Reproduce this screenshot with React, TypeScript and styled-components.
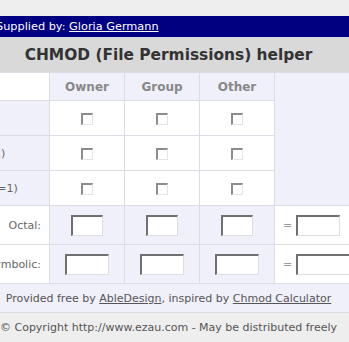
import React from 'react';
import styled, { createGlobalStyle } from 'styled-components';

const GlobalStyle = createGlobalStyle`
  body {
    margin: 0;
    background: #eeeeee;
    font-family: "DejaVu Sans", Verdana, sans-serif;
    overflow: hidden;
  }
`;

const Page = styled.div`
  margin-left: -70px;
  width: 477px;
  padding-top: 16px;
`;

const SupplyBar = styled.div`
  background: #000080;
  color: #ffffff;
  height: 21px;
  line-height: 21px;
  font-size: 11.3px;
  padding-left: 66px;

  a {
    color: #ffffff;
  }
`;

const Title = styled.h1`
  margin: 0;
  background: #d9d9d9;
  color: #333333;
  height: 35px;
  line-height: 36px;
  text-align: center;
  font-size: 15.4px;
  font-weight: bold;
`;

const Table = styled.table`
  width: 100%;
  border-collapse: collapse;
  table-layout: fixed;
  font-size: 11px;
  color: #666666;
`;

const Row = styled.tr<{ $h: number }>`
  height: ${p => p.$h}px;
`;

const Cell = styled.td<{ $shade?: boolean; $align?: string }>`
  border: 1px solid #dcdce4;
  background: ${p => (p.$shade ? '#f0f0fa' : '#ffffff')};
  text-align: ${p => p.$align || 'center'};
  padding: 0 8px;
  vertical-align: middle;
  white-space: nowrap;
`;

const HeadCell = styled(Cell).attrs({ as: 'th' })`
  color: #888888;
  font-weight: bold;
  font-size: 12px;
`;

const Box = styled.input.attrs({ type: 'checkbox' })`
  appearance: none;
  width: 12px;
  height: 12px;
  margin: 0;
  background: #ffffff;
  border-top: 2px solid #8c8c8c;
  border-left: 2px solid #8c8c8c;
  border-right: 1px solid #e4e4e4;
  border-bottom: 1px solid #e4e4e4;
  vertical-align: middle;
`;

const Field = styled.input.attrs({ type: 'text' })<{ $w: number }>`
  width: ${p => p.$w}px;
  height: 21px;
  box-sizing: border-box;
  margin: 0;
  padding: 0 2px;
  background: #ffffff;
  border-top: 2px solid #707070;
  border-left: 2px solid #707070;
  border-right: 1px solid #dedede;
  border-bottom: 1px solid #dedede;
  font-size: 11px;
  vertical-align: middle;
`;

const Equals = styled.span`
  color: #999999;
  margin-right: 4px;
  vertical-align: middle;
`;

const Footer = styled.td`
  border: 1px solid #dcdce4;
  background: #f0f0fa;
  text-align: center;
  font-size: 11px;
  color: #555555;

  a {
    color: #555555;
  }
`;

const Copy = styled.div`
  height: 30px;
  line-height: 30px;
  text-align: center;
  font-size: 11px;
  color: #555555;
`;

const perms = ['Read (r=4)', 'Write (w=2)', 'Execute (x=1)'];
const groups = ['Owner', 'Group', 'Other'];

export default function App() {
  return (
    <>
      <GlobalStyle />
      <Page>
        <SupplyBar>
          Supplied by: <a href="#">Gloria Germann</a>
        </SupplyBar>
        <Title>CHMOD (File Permissions) helper</Title>
        <Table>
          <colgroup>
            <col style={{ width: 119 }} />
            <col style={{ width: 75 }} />
            <col style={{ width: 75 }} />
            <col style={{ width: 75 }} />
            <col />
          </colgroup>
          <tbody>
            <Row $h={28}>
              <Cell />
              {groups.map(g => (
                <HeadCell key={g} $shade>{g}</HeadCell>
              ))}
              <Cell $shade rowSpan={4} />
            </Row>
            {perms.map(p => (
              <Row $h={35} key={p}>
                <Cell $shade $align="left">{p}</Cell>
                {groups.map(g => (
                  <Cell key={g}><Box /></Cell>
                ))}
              </Row>
            ))}
            <Row $h={39}>
              <Cell $align="right">Octal:</Cell>
              {groups.map(g => (
                <Cell key={g} $shade><Field $w={32} /></Cell>
              ))}
              <Cell $align="left"><Equals>=</Equals><Field $w={44} /></Cell>
            </Row>
            <Row $h={39}>
              <Cell $align="right">Symbolic:</Cell>
              {groups.map(g => (
                <Cell key={g} $shade><Field $w={44} /></Cell>
              ))}
              <Cell $align="left"><Equals>=</Equals><Field $w={80} /></Cell>
            </Row>
            <Row $h={29}>
              <Footer colSpan={5}>
                Provided free by <a href="#">AbleDesign</a>, inspired by <a href="#">Chmod Calculator</a>
              </Footer>
            </Row>
          </tbody>
        </Table>
        <Copy>© Copyright http://www.ezau.com - May be distributed freely</Copy>
      </Page>
    </>
  );
}
